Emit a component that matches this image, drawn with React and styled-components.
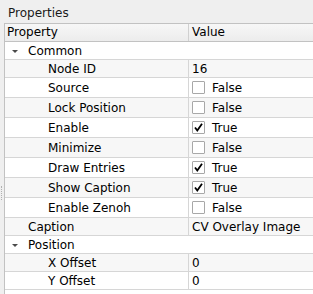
import React from "react";
import styled, { createGlobalStyle } from "styled-components";

const GlobalStyle = createGlobalStyle`
   body {
      margin: 0;
      background: #efefef;
      font-family: "DejaVu Sans", Verdana, sans-serif;
      font-size: 12px;
      color: #000;
   }
`;

const Panel = styled.div`
   width: 313px;
   height: 294px;
   display: flex;
   flex-direction: column;
   background: #efefef;
   overflow: hidden;
`;

const TitleBar = styled.div`
   height: 23px;
   box-sizing: border-box;
   padding: 6px 0 0 8px;
   line-height: 14px;
   color: #1a1a1a;
`;

const Body = styled.div`
   flex: 1;
   display: flex;
   min-height: 0;
`;

const Gutter = styled.div`
   width: 4px;
   flex: none;
   display: flex;
   flex-direction: column;
`;

const Handle = styled.div`
   margin: 163px 0 0 1px;
   width: 1px;
   height: 14px;
   border-left: 1px dotted #b0b0b0;
`;

const Frame = styled.div`
   flex: 1;
   background: #fff;
   border-left: 1px solid #c2c2c2;
   border-top: 1px solid #c2c2c2;
   display: flex;
   flex-direction: column;
`;

const Header = styled.div`
   display: grid;
   grid-template-columns: 184px 1fr;
   height: 18px;
   box-sizing: border-box;
   border-bottom: 1px solid #c2c2c2;
   background: linear-gradient(#f7f7f7, #ececec);
`;

const HeaderCell = styled.div`
   padding-left: ${p => p.pad}px;
   line-height: 17px;
   border-right: ${p => (p.divider ? "1px solid #d0d0d0" : "none")};
`;

const Row = styled.div`
   display: grid;
   grid-template-columns: ${p => (p.group ? "1fr" : "184px 1fr")};
   height: ${p => p.h}px;
   box-sizing: border-box;
   border-bottom: 1px solid #d6d6d6;
   background: ${p => (p.alt ? "#f7f7f7" : "#fff")};
`;

const NameCell = styled.div`
   display: flex;
   align-items: center;
   padding-left: ${p => p.indent}px;
   border-right: ${p => (p.group ? "none" : "1px solid #d6d6d6")};
   white-space: nowrap;
`;

const Arrow = styled.span`
   width: 0;
   height: 0;
   border-left: 3px solid transparent;
   border-right: 3px solid transparent;
   border-top: 3px solid #4a4a4a;
   margin: 1px 10px 0 7px;
`;

const ValueCell = styled.div`
   display: flex;
   align-items: center;
   padding-left: 3px;
   white-space: nowrap;
`;

const Box = styled.span`
   width: 13px;
   height: 13px;
   box-sizing: border-box;
   border: 1px solid #a8a8a8;
   background: #fff;
   border-radius: 1px;
   margin-right: 7px;
   display: flex;
   align-items: center;
   justify-content: center;
`;

const rows = [
   { group: true, label: "Common" },
   { label: "Node ID", value: "16", depth: 1 },
   { label: "Source", check: false, depth: 1 },
   { label: "Lock Position", check: false, depth: 1 },
   { label: "Enable", check: true, depth: 1 },
   { label: "Minimize", check: false, depth: 1 },
   { label: "Draw Entries", check: true, depth: 1 },
   { label: "Show Caption", check: true, depth: 1 },
   { label: "Enable Zenoh", check: false, depth: 1 },
   { label: "Caption", value: "CV Overlay Image", depth: 0 },
   { group: true, label: "Position" },
   { label: "X Offset", value: "0", depth: 1 },
   { label: "Y Offset", value: "0", depth: 1 }
];

const CheckBox = ({ on }) => (
   <Box>
      {on && (
         <svg width="11" height="11" viewBox="0 0 11 11">
            <polyline
               points="2,5.5 4.3,8.5 9,1.8"
               fill="none"
               stroke="#000"
               strokeWidth="1.8"
            />
         </svg>
      )}
   </Box>
);

export default function App() {
   return (
      <Panel>
         <GlobalStyle />
         <TitleBar>Properties</TitleBar>
         <Body>
            <Gutter>
               <Handle />
            </Gutter>
            <Frame>
               <Header>
                  <HeaderCell pad={2} divider>
                     Property
                  </HeaderCell>
                  <HeaderCell pad={3}>Value</HeaderCell>
               </Header>
               {rows.map((r, i) => {
                  const isCheck = r.check !== undefined;
                  if (r.group) {
                     return (
                        <Row key={r.label} group h={18} alt={i % 2 === 1}>
                           <NameCell group indent={0}>
                              <Arrow />
                              {r.label}
                           </NameCell>
                        </Row>
                     );
                  }
                  return (
                     <Row key={r.label} h={isCheck ? 20 : 18} alt={i % 2 === 1}>
                        <NameCell indent={r.depth ? 43 : 23}>{r.label}</NameCell>
                        <ValueCell>
                           {isCheck ? (
                              <>
                                 <CheckBox on={r.check} />
                                 {r.check ? "True" : "False"}
                              </>
                           ) : (
                              r.value
                           )}
                        </ValueCell>
                     </Row>
                  );
               })}
            </Frame>
         </Body>
      </Panel>
   );
}
